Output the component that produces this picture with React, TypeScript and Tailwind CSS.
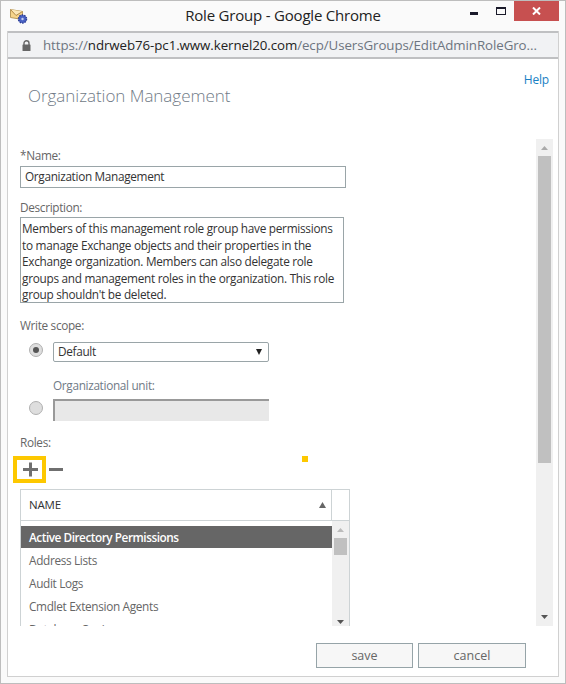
const font = "font-['Open_Sans',sans-serif]"

const descriptionLines = [
  "Members of this management role group have permissions",
  "to manage Exchange objects and their properties in the",
  "Exchange organization. Members can also delegate role",
  "groups and management roles in the organization. This role",
  "group shouldn't be deleted.",
]

const roles = ["Address Lists", "Audit Logs", "Cmdlet Extension Agents", "Database Copies"]

const MailIcon = () => (
  <svg width="18" height="16" viewBox="0 0 18 16">
    <path d="M0.5 1.5 L12.5 3.5 L12.5 11.5 L0.5 9.5 Z" fill="#f6d48a" stroke="#b99a5c" />
    <path d="M0.5 1.5 L6 7.5 L12.5 3.5" fill="#fbe7b8" stroke="#b0894a" />
    <circle cx="12.5" cy="11" r="4" fill="#4a62c4" stroke="#2d3f96" strokeDasharray="1.5 1" strokeWidth="1.5" />
    <circle cx="12.5" cy="11" r="1.2" fill="#c6d0f2" />
  </svg>
)

const LockIcon = () => (
  <svg width="9" height="11" viewBox="0 0 9 11" className="shrink-0">
    <path d="M2 5 V3.2 A2.5 2.5 0 0 1 7 3.2 V5" fill="none" stroke="#666" strokeWidth="1.4" />
    <rect x="0.5" y="4.5" width="8" height="6.5" rx="0.5" fill="#666" />
  </svg>
)

const Arrow = ({ up, color, w = 7, h = 4 }: { up?: boolean; color: string; w?: number; h?: number }) => (
  <svg width={w} height={h} viewBox={`0 0 ${w} ${h}`} className="block shrink-0">
    <path d={up ? `M${w / 2} 0 L${w} ${h} L0 ${h} Z` : `M0 0 L${w} 0 L${w / 2} ${h} Z`} fill={color} />
  </svg>
)

const Radio = ({ checked }: { checked?: boolean }) => (
  <span className="-mt-[4px] -ml-[1px] flex h-[14px] w-[14px] shrink-0 items-center justify-center rounded-full border border-[#b0b0b0] bg-[#dedede]">
    {checked && <span className="h-[6px] w-[6px] rounded-full bg-[#555]" />}
  </span>
)

export default function App() {
  return (
    <div className={`${font} flex h-[684px] w-[566px] flex-col overflow-hidden border border-[#bdbdbd] bg-[#fafafa] text-[12px] text-[#333]`}>
      {/* Title bar */}
      <div className="relative flex h-[30px] shrink-0 items-start justify-center">
        <span className="absolute left-[9px] top-[7px]"><MailIcon /></span>
        <span className="text-[15px] leading-[28px] tracking-[-0.2px] text-[#222]">Role Group - Google Chrome</span>
        <span className="absolute left-[469px] top-[11px] h-[3px] w-[8px] bg-[#1a1a2a]" />
        <span className="absolute left-[495px] top-[6px] h-[8px] w-[10px] border border-t-2 border-[#1a1a2a]" />
        <span className="absolute left-[513px] top-0 flex h-[20px] w-[45px] items-center justify-center bg-[#c75050]">
          <svg width="9" height="8" viewBox="0 0 9 8">
            <path d="M1 0.5 L8 7.5 M8 0.5 L1 7.5" stroke="#fff" strokeWidth="2" />
          </svg>
        </span>
      </div>

      <div className="mx-[6px] mb-[6px] flex min-h-0 flex-1 flex-col border-x border-b border-[#d0d0d0] bg-white">
        {/* Address bar */}
        <div className="flex h-[28px] shrink-0 items-center border-y-2 border-y-[#bfc0c2] bg-[#f1f2f4] pl-[14px]">
          <LockIcon />
          <span className="ml-[12px] mt-[1px] whitespace-nowrap text-[13.3px] tracking-[-0.07px] text-[#6d7580]">
            https://<span className="text-[#222]">ndrweb76-pc1.www.kernel20.com</span>/ecp/UsersGroups/EditAdminRoleGro...
          </span>
        </div>

        {/* Help */}
        <div className="flex h-[30px] shrink-0 items-end justify-end pr-[9px] tracking-[-0.2px] text-[#1a7fc4]">Help</div>

        {/* Heading */}
        <div className="-mt-[6px] h-[56px] shrink-0 pl-[20px] text-[17px] font-light tracking-[-0.03px] text-[#707a86]">Organization Management</div>

        {/* Scrolling form */}
        <div className="flex h-[487px] shrink-0 overflow-hidden">
          <div className="relative w-[528px] shrink-0 pl-[12px] text-[11.8px] tracking-[-0.33px]">
            <div className="mt-[8px] h-[17px] leading-[17px] text-[#666]">*Name:</div>
            <div className="mt-[2px] flex h-[22px] w-[326px] items-center border border-[#9aa5a8] pl-[4px] text-[#333]">Organization Management</div>

            <div className="mt-[11px] h-[17px] leading-[17px] text-[#666]">Description:</div>
            <div className="mt-[1px] h-[86px] w-[324px] border border-[#9aa5a8] pl-[1px] pt-[2px] leading-[16.5px] tracking-[-0.28px] whitespace-nowrap text-[#333]">
              {descriptionLines.map((line) => (
                <div key={line}>{line}</div>
              ))}
            </div>

            <div className="mt-[14px] h-[17px] leading-[17px] text-[#666]">Write scope:</div>
            <div className="mt-[8px] flex items-center pl-[10px]">
              <Radio checked />
              <div className="ml-[10px] flex h-[20px] w-[216px] items-center justify-between rounded-[2px] border border-[#9aa5a8] pl-[4px] pr-[6px] text-[#333]">
                Default
                <Arrow color="#222" w={6} h={6} />
              </div>
            </div>
            <div className="mt-[15px] h-[17px] pl-[33px] leading-[17px] text-[#707a86]">Organizational unit:</div>
            <div className="mt-[5px] flex items-center pl-[10px]">
              <Radio />
              <div className="ml-[10px] h-[22px] w-[216px] border-l-2 border-t-2 border-[#999] bg-[#e8e8e8]" />
            </div>

            <div className="mt-[13px] h-[17px] leading-[17px] text-[#666]">Roles:</div>

            {/* Add / remove toolbar */}
            <div className="ml-[-7px] mt-[5px] flex items-center">
              <div className="flex h-[27px] w-[33px] items-center justify-center border-[4px] border-[#fdc800] pl-[1px]">
                <svg width="17" height="15" viewBox="0 0 17 15" className="shrink-0">
                  <path d="M1 7.5 H16 M8.5 0.5 V14.5" stroke="#6f6f6f" strokeWidth="3" />
                </svg>
              </div>
              <span className="ml-[3px] h-[3px] w-[14px] bg-[#6f6f6f]" />
            </div>
            <span className="absolute left-[294px] top-[317px] h-[6px] w-[6px] bg-[#fdc800]" />

            {/* Roles table */}
            <div className="mt-[6px] w-[330px] border-x border-t border-[#cdd3d5]">
              <div className="flex h-[31px] border-b border-[#cdd3d5]">
                <div className="flex w-[311px] items-center justify-between border-r border-[#cdd3d5] pl-[8px] pr-[5px] text-[11.5px] tracking-[-0.2px] text-[#333]">
                  NAME
                  <Arrow up color="#666" w={7} h={6} />
                </div>
              </div>
              <div className="flex h-[105px] overflow-hidden">
                <div className="w-[311px] shrink-0 pt-[5px]">
                  <div className="flex h-[22px] items-center bg-[#666] pl-[8px] pt-[1px] font-semibold tracking-[-0.47px] text-white">Active Directory Permissions</div>
                  {roles.map((role) => (
                    <div key={role} className="flex h-[23px] items-center pl-[8px] pt-[2px] text-[#666]">{role}</div>
                  ))}
                </div>
                <div className="flex w-[17px] flex-col items-center bg-[#f0f0f0] pt-[7px]">
                  <Arrow up color="#bbb" />
                  <div className="mt-[6px] h-[17px] w-[13px] bg-[#c0c0c0]" />
                  <div className="mt-auto mb-[2px]"><Arrow color="#555" /></div>
                </div>
              </div>
            </div>
          </div>

          {/* Page scrollbar */}
          <div className="flex w-[17px] shrink-0 flex-col items-center bg-[#f0f0f0] pt-[7px]">
            <Arrow up color="#aaa" />
            <div className="mt-[6px] h-[307px] w-[13px] bg-[#c0c0c0]" />
            <div className="mt-auto mb-[7px]"><Arrow color="#555" /></div>
          </div>
        </div>

        {/* Footer buttons */}
        <div className="flex flex-1 items-start justify-end gap-[5px] pr-[32px] pt-[17px] text-[12.5px] text-[#666]">
          <button className="h-[25px] w-[97px] border border-[#96a4a8] bg-[#f7f7f7] pt-[1px]">save</button>
          <button className="h-[25px] w-[108px] border border-[#96a4a8] bg-[#f7f7f7] pt-[1px]">cancel</button>
        </div>
      </div>
    </div>
  )
}
